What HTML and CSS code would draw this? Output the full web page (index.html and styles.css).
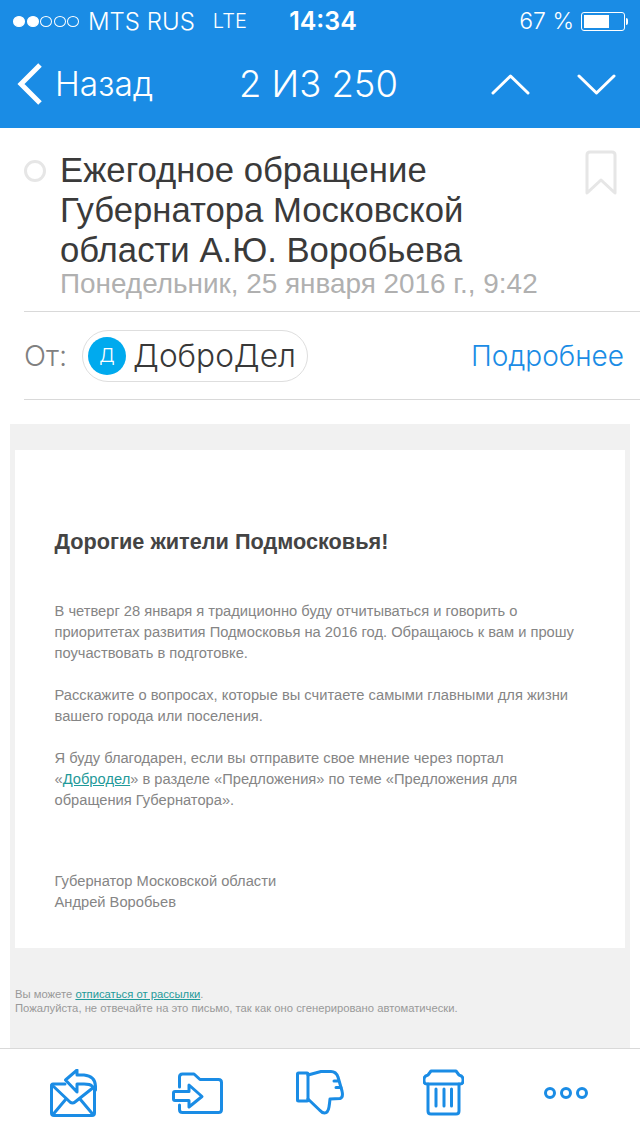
FILE: index.html
```html
<!DOCTYPE html>
<html lang="ru">
<head>
  <meta charset="UTF-8" />
  <title>Письмо</title>
  <link rel="stylesheet" href="styles.css">
</head>
<body>

<header class="top">
  <div class="status">
    <div class="status-left">
      <span class="signal"><i class="on"></i><i class="on"></i><i></i><i></i><i></i></span>
      <span class="carrier">MTS RUS</span>
      <span class="net">LTE</span>
    </div>
    <div class="clock">14:34</div>
    <div class="status-right">
      <span>67 %</span>
      <span class="battery"><span class="battery-level"></span></span>
    </div>
  </div>
  <nav class="navbar">
    <a class="back">
      <svg width="27" height="44" viewBox="0 0 27 44"><path d="M24 3 L5 22 L24 41" fill="none" stroke="#fff" stroke-width="5"/></svg>
      <span>Назад</span>
    </a>
    <div class="counter">2 ИЗ 250</div>
    <div class="arrows">
      <svg width="39" height="21" viewBox="0 0 39 21"><path d="M2 19 L19.5 2 L37 19" fill="none" stroke="#fff" stroke-width="3" stroke-linecap="round" stroke-linejoin="round"/></svg>
      <svg width="39" height="21" viewBox="0 0 39 21"><path d="M2 2 L19.5 19 L37 2" fill="none" stroke="#fff" stroke-width="3" stroke-linecap="round" stroke-linejoin="round"/></svg>
    </div>
  </nav>
</header>

<section class="subject">
  <span class="unread"></span>
  <div class="subject-text">
    <h1>Ежегодное обращение Губернатора Московской области А.Ю. Воробьева</h1>
    <div class="date">Понедельник, 25 января 2016 г., 9:42</div>
  </div>
  <svg class="bookmark" width="34" height="46" viewBox="0 0 34 46"><path d="M3 5 Q3 2 6 2 H28 Q31 2 31 5 V43 L17 30 L3 43 Z" fill="none" stroke="#e6e6e6" stroke-width="3" stroke-linejoin="round"/></svg>
</section>

<section class="from">
  <span class="from-label">От:</span>
  <span class="sender"><span class="avatar">Д</span>ДоброДел</span>
  <a class="more">Подробнее</a>
</section>

<main class="mail">
  <div class="mail-card">
    <h2>Дорогие жители Подмосковья!</h2>
    <p>В четверг 28 января я традиционно буду отчитываться и говорить о приоритетах развития Подмосковья на 2016 год. Обращаюсь к вам и прошу поучаствовать в подготовке.</p>
    <p>Расскажите о вопросах, которые вы считаете самыми главными для жизни вашего города или поселения.</p>
    <p>Я буду благодарен, если вы отправите свое мнение через портал «<a>Добродел</a>» в разделе «Предложения» по теме «Предложения для обращения Губернатора».</p>
    <p class="sign">Губернатор Московской области<br>Андрей Воробьев</p>
  </div>
  <div class="mail-foot">Вы можете <a>отписаться от рассылки</a>.<br>Пожалуйста, не отвечайте на это письмо, так как оно сгенерировано автоматически.</div>
</main>

<footer class="toolbar">
  <svg class="tool" width="47" height="48" viewBox="0 0 47 48" fill="none" stroke="#1a8ce5" stroke-width="3" stroke-linejoin="round" stroke-linecap="round">
    <path d="M15 15 H3 Q1.5 15 1.5 17 V44 Q1.5 46.5 4 46.5 H42 Q44.5 46.5 44.5 44 V20"/>
    <path d="M2 16 L20 33 Q22.5 35 25 33 L44 18"/>
    <path d="M3 45.5 L16 30 M43 45.5 L30 30"/>
    <path d="M15.5 11 L27 1 V6 H34 Q45 7 45.5 17 V21 L42 17 Q40 15 34 15 H27 V23 Z" fill="#fff"/>
  </svg>
  <svg class="tool tool-folder" width="51" height="42" viewBox="0 0 51 42" fill="none" stroke="#1a8ce5" stroke-width="3" stroke-linejoin="round" stroke-linecap="round">
    <path d="M7.5 15 V5 Q7.5 2 10.5 2 H22 L28 7.5 H46.5 Q49.5 7.5 49.5 10.5 V37.5 Q49.5 40.5 46.5 40.5 H10.5 Q7.5 40.5 7.5 37.5 V33"/>
    <path d="M3 19.5 H17 V13 L30 24.5 L17 35 V28.5 H3 Q1.5 28.5 1.5 27 V21 Q1.5 19.5 3 19.5 Z" fill="#fff"/>
  </svg>
  <svg class="tool tool-thumb" width="48" height="45" viewBox="0 0 48 45" fill="none" stroke="#1a8ce5" stroke-width="3" stroke-linejoin="round" stroke-linecap="round">
    <rect x="1.5" y="3" width="10.5" height="28" rx="1"/>
    <path d="M12 5 L25 1.5 H35 Q40 1.5 42 7 L46 21 Q47.5 27.5 44 28.5 L34 29 Q33.5 34 33 37 Q32 43 28.5 43 Q26 43 23.5 40 L12 29"/>
    <path d="M38 11 H41.5 M40 17.5 H45"/>
  </svg>
  <svg class="tool tool-trash" width="41" height="47" viewBox="0 0 41 47" fill="none" stroke="#1a8ce5" stroke-width="3" stroke-linejoin="round" stroke-linecap="round">
    <path d="M8 2 H33 L36 6 Q40 7 40 10 V12 Q40 15 37 15 H4 Q1 15 1 12 V10 Q1 7 5 6 Z"/>
    <path d="M5 15 V42 Q5 45 8 45 H33 Q36 45 36 42 V15"/>
    <path d="M13 20 V37 M21 20 V37 M28.5 20 V37"/>
  </svg>
  <svg class="tool tool-more" width="44" height="12" viewBox="0 0 44 12" fill="none" stroke="#1a8ce5" stroke-width="3">
    <circle cx="6" cy="6" r="4.5"/><circle cx="22" cy="6" r="4.5"/><circle cx="38" cy="6" r="4.5"/>
  </svg>
</footer>

</body>
</html>
```

FILE: styles.css
```css
* {
  box-sizing: border-box;
}
html, body {
  margin: 0;
  padding: 0;
}
body {
  width: 640px;
  height: 1136px;
  overflow: hidden;
  background: #fff;
  font-family: "Inter", "Liberation Sans", sans-serif;
  display: flex;
  flex-direction: column;
}
.top {
  background: #1a8ce5;
  color: #fff;
  height: 128px;
  flex-shrink: 0;
}
.status {
  height: 40px;
  padding: 2px 11px 0 13px;
  display: grid;
  grid-template-columns: 1fr 120px 1fr;
  align-items: center;
  font-size: 23px;
  font-weight: 300;
}
.status-left {
  display: flex;
  align-items: center;
}
.signal {
  display: flex;
  gap: 1.5px;
  margin-right: 9px;
}
.signal i {
  width: 12px;
  height: 11px;
  border-radius: 50%;
  border: 1px solid #fff;
}
.signal i.on {
  background: #fff;
}
.carrier {
  font-size: 24px;
}
.net {
  margin-left: 18px;
  font-size: 20px;
}
.clock {
  font-weight: 600;
  text-align: center;
  font-size: 25px;
  padding-left: 4px;
}
.status-right {
  display: flex;
  align-items: center;
  justify-content: flex-end;
  gap: 7px;
}
.battery {
  position: relative;
  width: 44px;
  height: 19px;
  border: 1px solid #fff;
  border-radius: 3px;
  padding: 2px;
  margin-right: 4px;
  display: flex;
}
.battery::after {
  content: "";
  position: absolute;
  right: -4px;
  top: 5px;
  width: 2px;
  height: 7px;
  background: #fff;
  border-radius: 0 2px 2px 0;
}
.battery-level {
  width: 65%;
  background: #fff;
}
.navbar {
  height: 88px;
  padding: 0 24px 0 16px;
  display: grid;
  grid-template-columns: 1fr auto 1fr;
  align-items: center;
  font-size: 33.5px;
  font-weight: 300;
}
.back {
  display: flex;
  align-items: center;
  gap: 12px;
}
.counter {
  font-size: 36.4px;
  margin-left: 5px;
}
.arrows {
  display: flex;
  justify-content: flex-end;
  gap: 47px;
}
.subject {
  display: flex;
  align-items: flex-start;
  padding: 22px 22px 0 24px;
  height: 183px;
  flex-shrink: 0;
}
.unread {
  width: 22px;
  height: 22px;
  border: 3px solid #e6e6e6;
  border-radius: 50%;
  margin-top: 10px;
  margin-right: 14px;
  flex-shrink: 0;
}
.subject-text {
  flex: 1;
}
.subject h1 {
  margin: 0;
  font-family: "Liberation Sans", Arial, sans-serif;
  font-size: 34.7px;
  line-height: 40px;
  font-weight: 400;
  color: #3a3a3a;
  width: 440px;
}
.date {
  font-family: "Liberation Sans", Arial, sans-serif;
  font-size: 27.9px;
  line-height: 26px;
  margin-top: 1px;
  color: #b0b0b0;
  white-space: nowrap;
}
.bookmark {
  flex-shrink: 0;
}
.from {
  margin-left: 24px;
  height: 89px;
  flex-shrink: 0;
  border-top: 1px solid #d9d9d9;
  border-bottom: 1px solid #d9d9d9;
  display: flex;
  align-items: center;
  padding-right: 16px;
}
.from-label {
  font-size: 29px;
  font-weight: 300;
  color: #808080;
  margin-right: 15px;
}
.sender {
  height: 52px;
  border: 1px solid #dedede;
  border-radius: 26px;
  padding: 0 11px 0 5px;
  display: flex;
  align-items: center;
  gap: 7px;
  font-size: 31.6px;
  font-weight: 300;
  color: #383838;
}
.avatar {
  width: 38px;
  height: 38px;
  border-radius: 50%;
  background: #00aaee;
  color: #fff;
  font-size: 19px;
  display: flex;
  align-items: center;
  justify-content: center;
}
.more {
  margin-left: auto;
  font-size: 28px;
  font-weight: 300;
  color: #1a8ce5;
}
.mail {
  flex: 1;
  margin: 24px 10px 0;
  background: #f1f1f1;
  padding: 26px 5px 0;
  font-family: "Liberation Sans", Arial, sans-serif;
  min-height: 0;
}
.mail-card {
  background: #fff;
  height: 498px;
  padding: 78px 40px 0 39.5px;
  font-size: 14.7px;
  line-height: 21px;
  color: #858585;
}
.mail-card h2 {
  margin: 0 0 45px;
  font-size: 21.7px;
  line-height: 28px;
  font-weight: 700;
  color: #444;
}
.mail-card p {
  margin: 0 0 21px;
}
.mail-card p.sign {
  margin-top: 60px;
}
.mail a,
.mail-foot a {
  color: #1f9a9a;
  text-decoration: underline;
}
.mail-foot {
  margin-top: 39px;
  font-size: 11.25px;
  line-height: 14px;
  color: #999;
}
.toolbar {
  height: 88px;
  flex-shrink: 0;
  border-top: 1px solid #d9d9d9;
  background: #fff;
  padding-left: 50px;
  display: flex;
  align-items: center;
}
.tool-folder {
  margin-left: 75px;
}
.tool-thumb {
  margin-left: 73px;
}
.tool-trash {
  margin-left: 79px;
}
.tool-more {
  margin-left: 80px;
}
```
